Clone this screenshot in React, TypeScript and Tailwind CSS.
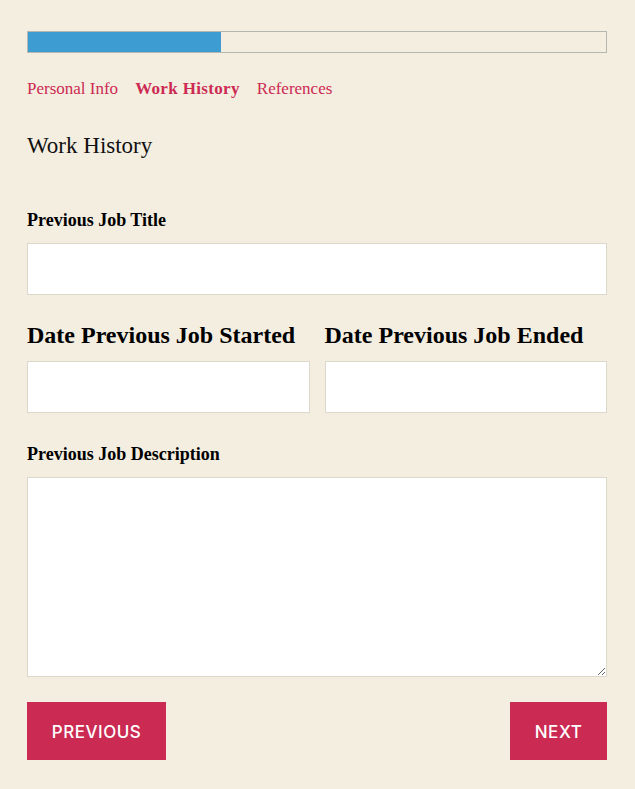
import React from "react";

const serif = { fontFamily: '"Liberation Serif", "DejaVu Serif", serif' };

export default function App() {
  const steps = ["Personal Info", "Work History", "References"];
  const current = 1;

  return (
    <div className="min-h-[789px] w-full bg-[#f4eee1] pl-[27px] pr-[28px] pt-[31px] pb-[29px]" style={serif}>
      {/* progress */}
      <div className="h-[22px] w-full border border-[#b7b7b2] bg-[#f4eee1]">
        <div className="h-full w-1/3 bg-[#3d9dd3]" />
      </div>

      <div className="mt-[26px] flex items-center gap-[17px] text-[17px] leading-[20px] text-[#cc2a52]">
        {steps.map((s, i) => (
          <span key={s} className={i === current ? "font-bold tracking-[0.02em]" : ""}>
            {s}
          </span>
        ))}
      </div>

      <h2 className="mt-[33px] text-[23px] leading-[28px] text-[#111]">Work History</h2>

      <form className="mt-[49px]">
        <label className="block text-[18px] font-bold leading-[22px] text-black">Previous Job Title</label>
        <input className="mt-[12px] block h-[52px] w-full border border-[#ddd8cc] bg-white px-3 outline-none" />

        <div className="mt-[25px] grid grid-cols-2 gap-[15px]">
          <div>
            <label className="block whitespace-nowrap text-[24px] font-bold leading-[30px] text-black">
              Date Previous Job Started
            </label>
            <input className="mt-[11px] block h-[52px] w-full border border-[#ddd8cc] bg-white px-3 outline-none" />
          </div>
          <div>
            <label className="block whitespace-nowrap text-[24px] font-bold leading-[30px] text-black">
              Date Previous Job Ended
            </label>
            <input className="mt-[11px] block h-[52px] w-full border border-[#ddd8cc] bg-white px-3 outline-none" />
          </div>
        </div>

        <label className="mt-[30px] block text-[18px] font-bold leading-[22px] text-black">Previous Job Description</label>
        <textarea className="mt-[12px] block h-[200px] w-full border border-[#ddd8cc] bg-white px-3 outline-none" />

        <div className="mt-[25px] flex items-center justify-between" style={{ fontFamily: 'Inter, "Liberation Sans", sans-serif' }}>
          <button type="button" className="h-[58px] w-[139px] bg-[#cb2a53] pt-[3px] text-[17px] font-medium tracking-[0.03em] text-white">
            PREVIOUS
          </button>
          <button type="button" className="h-[58px] w-[97px] bg-[#cb2a53] pt-[3px] text-[17px] font-medium tracking-[0.03em] text-white">
            NEXT
          </button>
        </div>
      </form>
    </div>
  );
}
